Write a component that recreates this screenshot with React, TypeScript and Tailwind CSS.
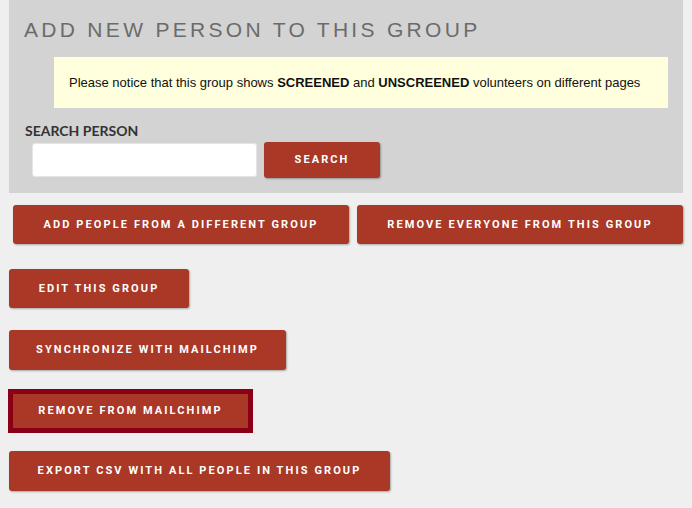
import React from "react";

const btn =
  "flex items-center justify-center pt-[1px] rounded-[3px] bg-[#a93826] text-white font-bold text-[11px] tracking-[2.1px] uppercase shadow-[1px_1px_2px_rgba(0,0,0,0.3)] [font-family:Roboto,'Liberation_Sans',sans-serif]";

export default function App() {
  return (
    <div className="w-[692px] h-[508px] bg-[#efefef] overflow-hidden [font-family:'Liberation_Sans',Arial,sans-serif]">
      <div className="ml-[9px] w-[674px] h-[193px] bg-[#d3d3d3] flex flex-col">
        <h1 className="pl-[15px] pt-[18px] text-[21px] leading-[24px] tracking-[3.3px] text-[#6b6b6b] font-normal">
          ADD NEW PERSON TO THIS GROUP
        </h1>
        <div className="ml-[45px] mt-[15px] w-[614px] h-[51px] bg-[#ffffdd] flex items-center pl-[15px] text-[13px] text-[#111]">
          <span>
            Please notice that this group shows <b>SCREENED</b> and <b>UNSCREENED</b> volunteers on different pages
          </span>
        </div>
        <div className="ml-[16px] mt-[14px] text-[14px] leading-[17px] font-bold text-[#333] [font-family:Lato,'Liberation_Sans',sans-serif]">
          SEARCH PERSON
        </div>
        <div className="flex items-center ml-[23px] mt-[3px] gap-[7px]">
          <div className="w-[225px] h-[34px] bg-white rounded-[3px] border border-[#e6e6e6]" />
          <button className={`${btn} w-[116px] h-[36px]`}>SEARCH</button>
        </div>
      </div>

      <div className="flex gap-[8px] ml-[13px] mt-[12px]">
        <button className={`${btn} w-[336px] h-[39px]`}>ADD PEOPLE FROM A DIFFERENT GROUP</button>
        <button className={`${btn} w-[326px] h-[39px]`}>REMOVE EVERYONE FROM THIS GROUP</button>
      </div>

      <div className="flex flex-col items-start ml-[9px]">
        <button className={`${btn} mt-[25px] w-[180px] h-[39px]`}>EDIT THIS GROUP</button>
        <button className={`${btn} mt-[22px] w-[277px] h-[40px]`}>SYNCHRONIZE WITH MAILCHIMP</button>
        <div className="mt-[19px] -ml-[1px] border-[5px] border-[#8b0016]">
          <button className={`${btn} w-[235px] h-[34px] rounded-none shadow-none`}>REMOVE FROM MAILCHIMP</button>
        </div>
        <button className={`${btn} mt-[18px] w-[381px] h-[40px]`}>EXPORT CSV WITH ALL PEOPLE IN THIS GROUP</button>
      </div>
    </div>
  );
}
